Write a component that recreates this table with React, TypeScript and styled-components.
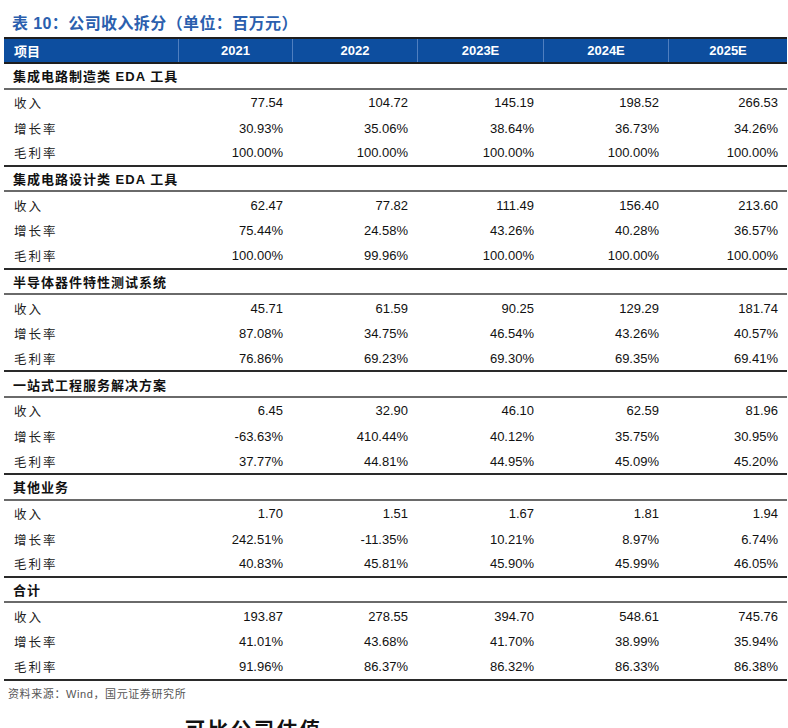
import React from 'react';
import styled, { createGlobalStyle } from 'styled-components';

const GlobalStyle = createGlobalStyle`
    body {
        margin: 0;
        background: #ffffff;
        font-family: "Liberation Sans", "Noto Sans CJK SC", Arial, sans-serif;
        color: #111111;
    }
`;

const COLS = '174px 114px 125px 126px 125px 1fr';

const Page = styled.div`
    width: 788px;
    height: 728px;
    overflow: hidden;
    padding: 0 1px 0 4px;
    box-sizing: border-box;
`;

const Title = styled.div`
    padding: 14px 0 3px 8px;
    line-height: 20px;
    font-size: 16px;
    font-weight: 700;
    color: #2b5fae;
    letter-spacing: 0.4px;
`;

const HeaderRow = styled.div`
    display: grid;
    grid-template-columns: ${COLS};
    height: 27px;
    box-sizing: border-box;
    background: #0d4e9f;
    border-top: 2px solid #1e1e1e;
    border-bottom: 2px solid #1e1e1e;
`;

const HeaderCell = styled.div<{ $first?: boolean }>`
    display: flex;
    align-items: center;
    justify-content: ${(p) => (p.$first ? 'flex-start' : 'center')};
    padding-left: ${(p) => (p.$first ? '10px' : '0')};
    color: #ffffff;
    font-size: 13px;
    font-weight: 700;
    border-left: ${(p) => (p.$first ? 'none' : '1px solid #4f7fc0')};
`;

const SectionLabel = styled.div`
    height: 25.7px;
    box-sizing: border-box;
    display: flex;
    align-items: center;
    padding-left: 9px;
    font-size: 13px;
    font-weight: 700;
    letter-spacing: 1px;
    color: #111111;
    border-bottom: 2px solid #6a6a6a;
`;

const DataRow = styled.div<{ $last?: boolean }>`
    display: grid;
    grid-template-columns: ${COLS};
    height: 25.7px;
    box-sizing: border-box;
    border-bottom: ${(p) => (p.$last ? '2px solid #2a2a2a' : 'none')};
`;

const RowLabel = styled.div`
    display: flex;
    align-items: center;
    padding-left: 10px;
    font-size: 12.5px;
    letter-spacing: 2px;
    color: #222222;
`;

const Num = styled.div`
    display: flex;
    align-items: center;
    justify-content: flex-end;
    padding-right: 9px;
    font-size: 13px;
    color: #111111;
`;

const Source = styled.div`
    padding: 7px 0 0 4px;
    line-height: 13px;
    font-size: 11px;
    color: #555555;
    letter-spacing: 0.6px;
`;

const NextHeading = styled.div`
    margin-top: 15px;
    padding-left: 181px;
    line-height: 28px;
    font-size: 20px;
    font-weight: 700;
    letter-spacing: 3px;
    color: #111111;
`;

const years = ['2021', '2022', '2023E', '2024E', '2025E'];

const sections: { name: string; rows: [string, string[]][] }[] = [
    {
        name: '集成电路制造类 EDA 工具',
        rows: [
            ['收入', ['77.54', '104.72', '145.19', '198.52', '266.53']],
            ['增长率', ['30.93%', '35.06%', '38.64%', '36.73%', '34.26%']],
            ['毛利率', ['100.00%', '100.00%', '100.00%', '100.00%', '100.00%']],
        ],
    },
    {
        name: '集成电路设计类 EDA 工具',
        rows: [
            ['收入', ['62.47', '77.82', '111.49', '156.40', '213.60']],
            ['增长率', ['75.44%', '24.58%', '43.26%', '40.28%', '36.57%']],
            ['毛利率', ['100.00%', '99.96%', '100.00%', '100.00%', '100.00%']],
        ],
    },
    {
        name: '半导体器件特性测试系统',
        rows: [
            ['收入', ['45.71', '61.59', '90.25', '129.29', '181.74']],
            ['增长率', ['87.08%', '34.75%', '46.54%', '43.26%', '40.57%']],
            ['毛利率', ['76.86%', '69.23%', '69.30%', '69.35%', '69.41%']],
        ],
    },
    {
        name: '一站式工程服务解决方案',
        rows: [
            ['收入', ['6.45', '32.90', '46.10', '62.59', '81.96']],
            ['增长率', ['-63.63%', '410.44%', '40.12%', '35.75%', '30.95%']],
            ['毛利率', ['37.77%', '44.81%', '44.95%', '45.09%', '45.20%']],
        ],
    },
    {
        name: '其他业务',
        rows: [
            ['收入', ['1.70', '1.51', '1.67', '1.81', '1.94']],
            ['增长率', ['242.51%', '-11.35%', '10.21%', '8.97%', '6.74%']],
            ['毛利率', ['40.83%', '45.81%', '45.90%', '45.99%', '46.05%']],
        ],
    },
    {
        name: '合计',
        rows: [
            ['收入', ['193.87', '278.55', '394.70', '548.61', '745.76']],
            ['增长率', ['41.01%', '43.68%', '41.70%', '38.99%', '35.94%']],
            ['毛利率', ['91.96%', '86.37%', '86.32%', '86.33%', '86.38%']],
        ],
    },
];

function App() {
    return (
        <Page>
            <GlobalStyle />
            <Title>表 10：公司收入拆分（单位：百万元）</Title>
            <HeaderRow>
                <HeaderCell $first>项目</HeaderCell>
                {years.map((y) => (
                    <HeaderCell key={y}>{y}</HeaderCell>
                ))}
            </HeaderRow>
            {sections.map((s) => (
                <div key={s.name}>
                    <SectionLabel>{s.name}</SectionLabel>
                    {s.rows.map(([label, values], i) => (
                        <DataRow key={label} $last={i === s.rows.length - 1}>
                            <RowLabel>{label}</RowLabel>
                            {values.map((v, j) => (
                                <Num key={j}>{v}</Num>
                            ))}
                        </DataRow>
                    ))}
                </div>
            ))}
            <Source>资料来源：Wind，国元证券研究所</Source>
            <NextHeading>可比公司估值</NextHeading>
        </Page>
    );
}

export default App;
